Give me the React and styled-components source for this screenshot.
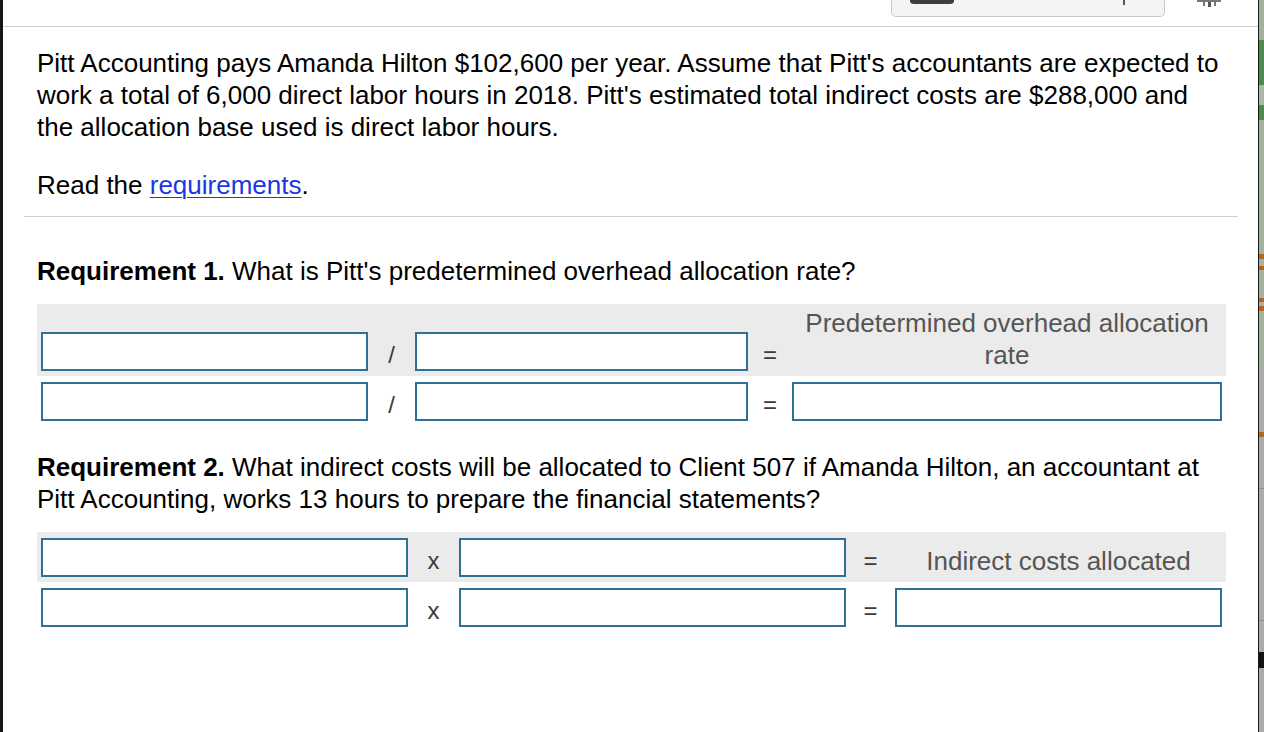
import React from "react";
import styled, { createGlobalStyle } from "styled-components";

const Global = createGlobalStyle`
  html, body, #root { height: 100%; margin: 0; padding: 0; }
  body {
    font-family: "Liberation Sans", Arial, Helvetica, sans-serif;
    background: #ffffff;
    overflow: hidden;
  }
  * { box-sizing: border-box; }
`;

const Frame = styled.div`
  display: flex;
  width: 1264px;
  height: 732px;
`;

const LeftEdge = styled.div`
  width: 3px;
  background: #151515;
  flex: none;
`;

const RightEdge = styled.div`
  width: 1px;
  background: #1a1a1a;
  flex: none;
`;

const Strip = styled.div`
  width: 5px;
  flex: none;
  background: linear-gradient(
    to bottom,
    #a2b19e 0px, #a2b19e 40px,
    #4c8a50 40px, #4c8a50 85px,
    #a8b9a4 85px, #a8b9a4 105px,
    #4c8a50 105px, #4c8a50 120px,
    #a3b3a0 120px, #a3b3a0 254px,
    #b5651d 254px, #b5651d 259px,
    #a3b3a0 259px, #a3b3a0 266px,
    #b5651d 266px, #b5651d 270px,
    #a3b3a0 270px, #a3b3a0 298px,
    #b5651d 298px, #b5651d 302px,
    #a3b3a0 302px, #a3b3a0 306px,
    #b5651d 306px, #b5651d 311px,
    #a3b3a0 311px, #a3b3a0 365px,
    #ababab 365px, #ababab 432px,
    #b5651d 432px, #b5651d 437px,
    #ababab 437px, #ababab 488px,
    #8f8f8f 488px, #8f8f8f 489px,
    #ababab 489px, #ababab 620px,
    #8f8f8f 620px, #8f8f8f 621px,
    #ababab 621px, #ababab 652px,
    #111 652px, #111 668px,
    #ababab 668px, #ababab 732px
  );
`;

const Main = styled.div`
  flex: 1;
  background: #ffffff;
  display: flex;
  flex-direction: column;
  overflow: hidden;
`;

const TopBar = styled.div`
  height: 27px;
  flex: none;
  border-bottom: 1px solid #cdcfdc;
  display: flex;
  justify-content: flex-end;
  align-items: flex-start;
  gap: 30px;
  padding-right: 35px;
`;

const ToolButton = styled.div`
  width: 274px;
  height: 17px;
  background: #f4f4f4;
  border: 1px solid #c9c9c9;
  border-top: none;
  border-radius: 0 0 5px 5px;
  display: flex;
  align-items: flex-start;
  justify-content: space-between;
  padding: 0 39px 0 18px;
`;

const IconStub = styled.svg`
  display: block;
  flex: none;
`;

const Content = styled.div`
  padding: 20px 32px 0 34px;
  display: flex;
  flex-direction: column;
  color: #000000;
  font-size: 26px;
  line-height: 32px;
`;

const Para = styled.p`
  margin: 0;
`;

const ReadLine = styled.p`
  margin: 26px 0 0 0;
`;

const Link = styled.a`
  color: #1b36e3;
  text-decoration: underline;
  text-underline-offset: 3px;
  text-decoration-thickness: 1px;
`;

const Rule = styled.div`
  height: 1px;
  background: #cdcfdc;
  margin: 15px -12px 0 -13px;
`;

const Question = styled.p`
  margin: ${(p) => p.$top}px -6px 0 0;
`;

const Table = styled.div`
  margin-top: 17px;
  display: flex;
  flex-direction: column;
`;

const Row = styled.div`
  display: grid;
  grid-template-columns: ${(p) => p.$cols};
  align-items: end;
  padding: ${(p) => p.$pad};
  background: ${(p) => (p.$shade ? "#ebebeb" : "transparent")};
`;

const Field = styled.div`
  height: 39px;
  border: 2px solid #2f7193;
  background: #ffffff;
`;

const Op = styled.div`
  text-align: center;
  color: #3c3c3c;
  font-size: 24px;
  line-height: 32px;
`;

const Heading = styled.div`
  text-align: center;
  color: #555555;
  line-height: 32px;
`;

const COLS1 = "327px 47px 333px 44px 430px";
const COLS2 = "367px 51px 387px 49px 327px";

export default function App() {
  return (
    <>
      <Global />
      <Frame>
        <LeftEdge />
        <Main>
          <TopBar>
            <ToolButton>
              <IconStub width="44" height="4" viewBox="0 0 44 4">
                <path d="M0 0 H44 V1 Q44 4 40 4 H4 Q0 4 0 1 Z" fill="#3d3d3d" />
              </IconStub>
              <IconStub width="2" height="5" viewBox="0 0 2 5">
                <rect x="0" y="0" width="2" height="5" fill="#555" />
              </IconStub>
            </ToolButton>
            <IconStub width="28" height="7" viewBox="0 0 28 7">
              <rect x="2" y="0" width="24" height="2" fill="#777" />
              <rect x="8" y="2" width="2" height="4" fill="#777" />
              <rect x="13" y="2" width="3" height="5" fill="#555" />
              <rect x="19" y="2" width="2" height="4" fill="#777" />
            </IconStub>
          </TopBar>
          <Content>
            <Para>
              Pitt Accounting pays Amanda Hilton $102,600 per year. Assume that
              Pitt's accountants are expected to work a total of 6,000 direct
              labor hours in 2018. Pitt's estimated total indirect costs are
              $288,000 and the allocation base used is direct labor hours.
            </Para>
            <ReadLine>
              Read the <Link href="#">requirements</Link>.
            </ReadLine>
            <Rule />
            <Question $top={38}>
              <b>Requirement 1.</b> What is Pitt's predetermined overhead
              allocation rate?
            </Question>
            <Table>
              <Row $cols={COLS1} $pad="3px 4px 5px" $shade>
                <Field />
                <Op>/</Op>
                <Field />
                <Op>=</Op>
                <Heading>
                  Predetermined overhead allocation
                  <br />
                  rate
                </Heading>
              </Row>
              <Row $cols={COLS1} $pad="6px 4px 4px">
                <Field />
                <Op>/</Op>
                <Field />
                <Op>=</Op>
                <Field />
              </Row>
            </Table>
            <Question $top={26}>
              <b>Requirement 2.</b> What indirect costs will be allocated to
              Client 507 if Amanda Hilton, an accountant at Pitt Accounting,
              works 13 hours to prepare the financial statements?
            </Question>
            <Table>
              <Row $cols={COLS2} $pad="6px 4px 5px" $shade>
                <Field />
                <Op>x</Op>
                <Field />
                <Op>=</Op>
                <Heading>Indirect costs allocated</Heading>
              </Row>
              <Row $cols={COLS2} $pad="6px 4px 4px">
                <Field />
                <Op>x</Op>
                <Field />
                <Op>=</Op>
                <Field />
              </Row>
            </Table>
          </Content>
        </Main>
        <RightEdge />
        <Strip />
      </Frame>
    </>
  );
}
